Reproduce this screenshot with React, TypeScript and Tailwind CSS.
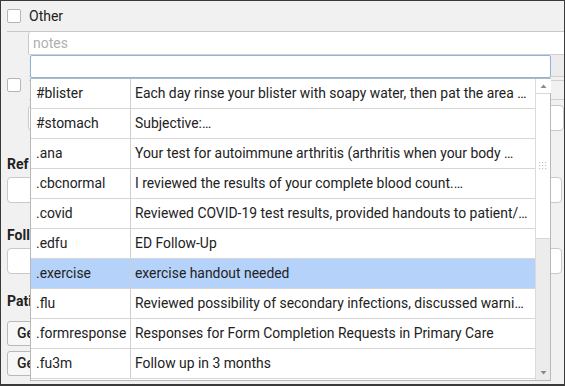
import React from 'react'

const SNIPPETS: [string, string][] = [
  ['#blister', 'Each day rinse your blister with soapy water, then pat the area …'],
  ['#stomach', 'Subjective:…'],
  ['.ana', 'Your test for autoimmune arthritis (arthritis when your body …'],
  ['.cbcnormal', 'I reviewed the results of your complete blood count.…'],
  ['.covid', 'Reviewed COVID-19 test results, provided handouts to patient/…'],
  ['.edfu', 'ED Follow-Up'],
  ['.exercise', 'exercise handout needed'],
  ['.flu', 'Reviewed possibility of secondary infections, discussed warni…'],
  ['.formresponse', 'Responses for Form Completion Requests in Primary Care'],
  ['.fu3m', 'Follow up in 3 months'],
]

const ACTIVE = 6

function Checkbox() {
  return <div className="w-[14px] h-[14px] shrink-0 bg-white border border-[#b5b5b5] rounded-[2px]" />
}

// only the left edge of these shows past the popup
function Button({ label }: { label: string }) {
  return (
    <div className="h-[25px] w-[120px] flex items-center pl-[9px] rounded-[3px] border border-[#b9b9b9] bg-[#f7f7f7] text-[14px] font-medium text-[#222]">
      {label}
    </div>
  )
}

function Section({ label, h }: { label: string; h: string }) {
  return <div className={`${h} flex items-end pb-[2px] text-[14px] font-bold`}>{label}</div>
}

export default function App() {
  return (
    <div
      className="relative w-[565px] h-[386px] overflow-hidden border border-[#3a3a3a] border-b-2 bg-[#f1f1f1] text-[#222]"
      style={{ fontFamily: 'Roboto, "Liberation Sans", sans-serif' }}
    >
      {/* form behind the popup */}
      <div className="flex flex-col pl-[6px]">
        <div className="flex items-center gap-[8px] h-[31px] border-b border-[#c9c9c9]">
          <Checkbox />
          <span className="text-[14px]">Other</span>
        </div>
        <div className="ml-[21px] h-[22px] bg-white border-l border-[#c9c9c9] rounded-tl-[3px] flex items-center pl-[4px] text-[14px] text-[#b0b0b0]">
          notes
        </div>
        <div className="ml-[22px] h-[23px] border-y border-[#cfcfcf] bg-[#ececec]" />
        <div className="flex items-start gap-[8px] h-[28px] pt-[1px]">
          <Checkbox />
          <div className="flex-1 h-[20px] mt-[2px] border-y border-[#cfcfcf]" />
        </div>
        <div className="ml-[21px] h-[26px] bg-white border border-[#c9c9c9] rounded-[4px]" />
        <Section label="Ref" h="h-[46px]" />
        <div className="h-[26px] mr-[2px] bg-white border border-[#c9c9c9] rounded-[4px]" />
        <Section label="Foll" h="h-[45px]" />
        <div className="h-[26px] mr-[2px] bg-white border border-[#c9c9c9] rounded-[4px]" />
        <Section label="Pati" h="h-[40px]" />
        <div className="flex flex-col gap-[5px] pt-[7px]">
          <Button label="Ge" />
          <Button label="Ge" />
        </div>
      </div>

      {/* autocomplete input */}
      <div className="absolute left-[29px] top-[54px] w-[521px] h-[23px] bg-white border border-[#8fb2df] rounded-[2px]" />

      {/* autocomplete popup */}
      <div className="absolute left-[29px] top-[77px] w-[521px] h-[303px] bg-white border border-[#b8b8b8] flex">
        <div className="flex-1 flex flex-col">
          {SNIPPETS.map(([key, text], i) => (
            <div
              key={key}
              className={`flex h-[30px] shrink-0 border-b border-[#d6d6d6] text-[13.9px] ${i === ACTIVE ? 'bg-[#b5d3fa]' : 'bg-white'}`}
            >
              <div className="w-[100px] shrink-0 border-r border-[#cfcfcf] pl-[5px] flex items-center whitespace-nowrap">
                {key}
              </div>
              <div className="flex-1 pl-[4px] flex items-center whitespace-nowrap">{text}</div>
            </div>
          ))}
        </div>
        {/* scrollbar */}
        <div className="w-[15px] shrink-0 border-l border-[#dadada] bg-[#ececec] flex flex-col items-center">
          <svg width="15" height="14" viewBox="0 0 15 14" className="shrink-0 bg-white">
            <path d="M4.5 9 L7.5 5.5 L10.5 9 Z" fill="#8a8a8a" />
          </svg>
          <div className="w-[14px] h-[146px] bg-white border-y border-[#d8d8d8] flex items-center justify-center">
            <svg width="8" height="8" viewBox="0 0 8 8">
              {[0, 3, 6].map((y) =>
                [0, 3, 6].map((x) => <rect key={`${x}-${y}`} x={x} y={y} width="1.2" height="1.2" fill="#c4c4c4" />),
              )}
            </svg>
          </div>
          <div className="flex-1" />
          <svg width="15" height="14" viewBox="0 0 15 14" className="shrink-0">
            <path d="M4.5 5 L7.5 8.5 L10.5 5 Z" fill="#8a8a8a" />
          </svg>
        </div>
      </div>
    </div>
  )
}
